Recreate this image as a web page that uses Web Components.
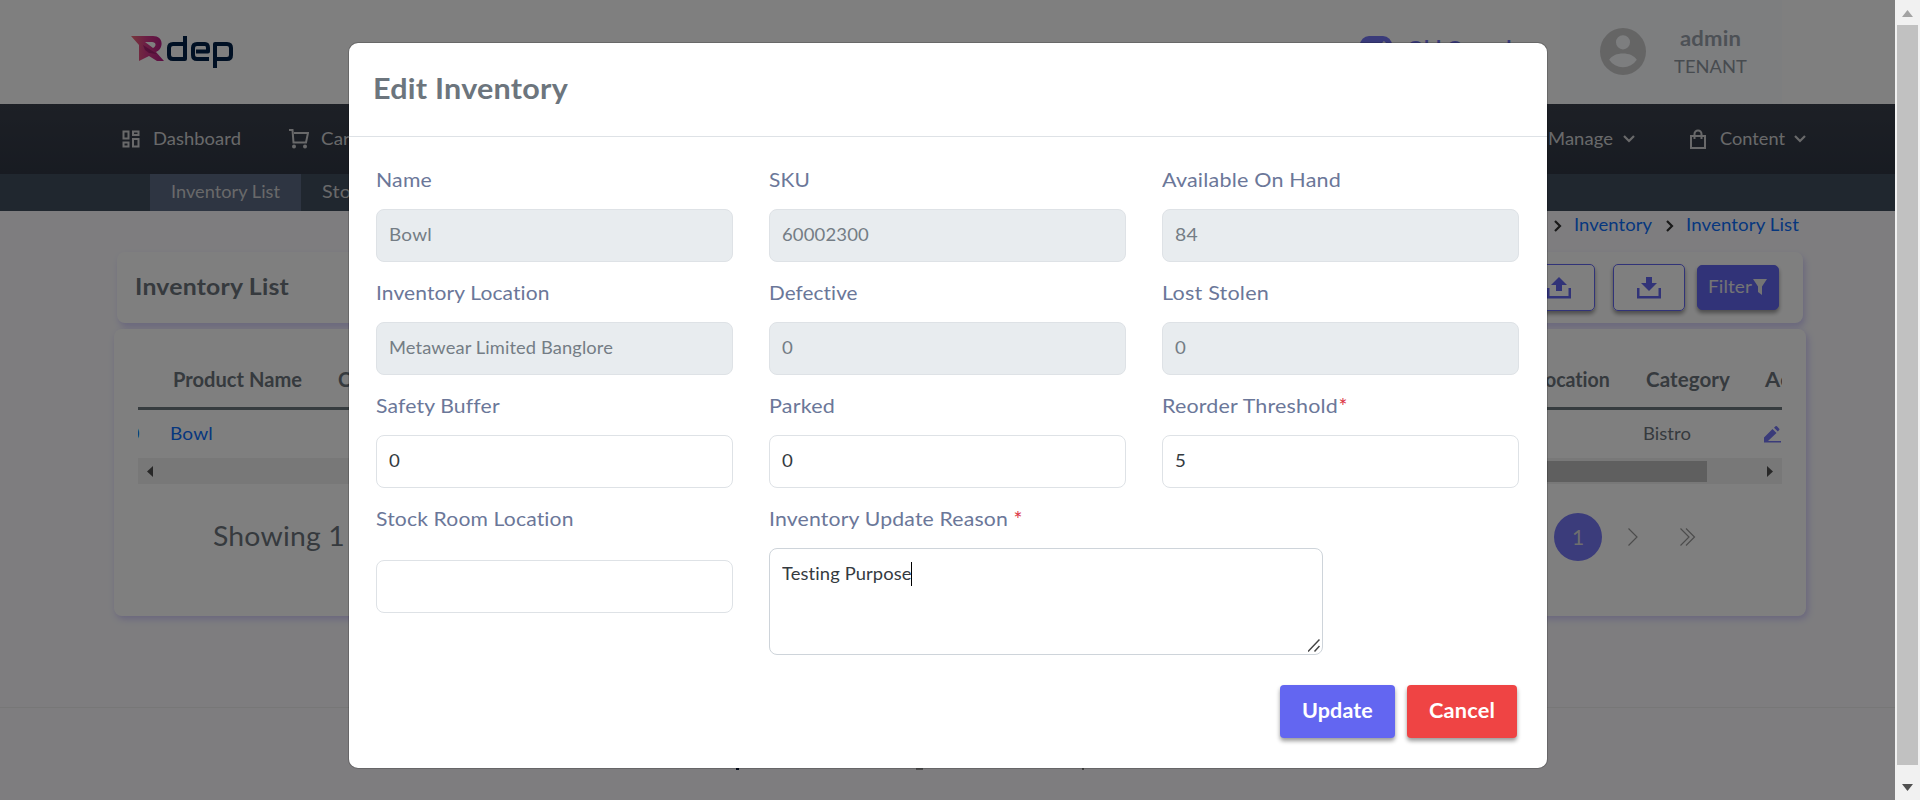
<!DOCTYPE html>
<html lang="en"><head><meta charset="utf-8"><title>Edit Inventory</title>
<style>
html,body{margin:0;height:800px;overflow:hidden;background:#fff;font-family:Lato,"Open Sans",sans-serif}
</style></head><body><inventory-app></inventory-app>
<script>
const define=(name,html,after)=>customElements.define(name,class extends HTMLElement{
  connectedCallback(){
    if(this.shadowRoot)return;
    const t=document.createElement('template');t.innerHTML=html;
    this.attachShadow({mode:'open'}).append(t.content.cloneNode(true));
    if(after)after(this,this.shadowRoot);
  }
});

// Text with a fixed advance: the glyphs are widened so that the word fills its width.
define('fit-text',`<style>:host{display:block;flex:none;white-space:pre;line-height:1.2}span{display:inline-block;white-space:pre;transform-origin:0 50%}</style><span><slot></slot></span>`,(el,r)=>{
  const w=+el.getAttribute('w'),s=r.querySelector('span'),n=el.textContent.length;
  el.style.fontSize=el.getAttribute('s')+'px';
  if(w){
    const nat=s.getBoundingClientRect().width,spacing=(w-nat)*.2/n;
    el.style.width=w+'px';s.style.letterSpacing=spacing+'px';
    s.style.transform=`scaleX(${w/(nat+spacing*n)})`;
  }
});

const icons={
 dash:['0 0 18 18','<path fill="none" stroke="currentColor" stroke-width="2" d="M1.5 1.5h5v7h-5zM11 1.5h5.500v3.500H11zM1.500 12.500h5v4h-5zM11 9h5.500v7.500H11z"/>'],
 cart:['0 0 20 20','<path fill="none" stroke="currentColor" stroke-width="2" d="M0 1h3.500l1 12.500H17L19 4H5"/><circle cx="5" cy="17.500" r="2"/><circle cx="16" cy="17.500" r="2"/>'],
 bag:['0 0 16 20','<path fill="none" stroke="currentColor" stroke-width="2" d="M1 7h14v12H1zM4.500 10V5a3.500 3.500 0 0 1 7 0v5"/>'],
 down:['0 0 12 8','<path fill="none" stroke="currentColor" stroke-width="2.200" d="M1 1l5 5 5-5"/>'],
 right:['0 0 8 12','<path fill="none" stroke="currentColor" stroke-width="2.200" d="M1 1l5 5-5 5"/>'],
 next:['0 0 10 18','<path fill="none" stroke="currentColor" stroke-width="1.200" d="M.5.500l8.500 8.500-8.500 8.500"/>'],
 last:['0 0 16 18','<path fill="none" stroke="currentColor" stroke-width="1.200" d="M.5.500l8.500 8.500-8.500 8.500M6 .5l8.500 8.500L6 17.500"/>'],
 user:['0 0 46 46','<path fill-rule="evenodd" d="M23 0a23 23 0 1 0 0 46 23 23 0 0 0 0-46zM23 7a7 7 0 1 1 0 14 7 7 0 0 1 0-14zM9.200 31C12 27 17 25 23 25s11 2 13.800 6A16.600 16.600 0 0 1 9.200 31z"/>'],
 upload:['0 0 24 22','<path d="M12 0l8 8h-5v6H9V8H4zM0 11h2.500v8h19v-8H24v10.500H0z"/>'],
 download:['0 0 24 22','<path d="M9 0h6v6h5l-8 8-8-8h5zM0 11h2.500v8h19v-8H24v10.500H0z"/>'],
 funnel:['0 0 14 16','<path d="M0 0h14L9 7.500V16l-4-3V7.500z"/>'],
 pencil:['0 0 17 17','<path d="M0 11.500L8.500 3l4 4L4 15H0zM10 1.800L11.500.300q.7-.6 1.400 0l2.300 2.400q.6.600 0 1.300L13.800 5.600zM0 15h17v1.500H0z"/>'],
 left:['0 0 6 11','<path d="M6 0v11L0 5.500z"/>'],
 rightTri:['0 0 6 11','<path d="M0 0v11l6-5.500z"/>'],
 upTri:['0 0 11 7','<path d="M5.500 0L11 7H0z"/>'],
 downTri:['0 0 11 7','<path d="M0 0h11L5.500 7z"/>'],
 grip:['0 0 12 13','<path fill="none" stroke="#444" stroke-width="1.500" d="M0 12.500L11.500.500M6.500 12.500L11.500 7"/>'],
 edit:['0 0 32 30','<rect width="32" height="30" rx="9"/><path stroke="#fff" stroke-width="3" d="M12 21L25 6"/>']
};
define('ui-icon',`<style>:host{display:block;flex:none}svg{display:block;width:100%;height:100%;fill:currentColor}</style>`,(el,r)=>{
  const [vb,p]=icons[el.getAttribute('name')],b=vb.split(' ');
  el.style.width=(el.getAttribute('w')||b[2])+'px';el.style.height=(el.getAttribute('h')||b[3])+'px';
  r.innerHTML+=`<svg viewBox="${vb}" preserveAspectRatio="none">${p}</svg>`;
});

define('brand-logo',`<style>:host{display:block;width:104px;height:36px}svg{display:block}</style>
<svg width="104" height="36" viewBox="0 0 104 36"><defs><linearGradient id="g"><stop offset="0" stop-color="#f07078"/><stop offset=".45" stop-color="#d83c88"/><stop offset="1" stop-color="#b41a86"/></linearGradient></defs>
<path fill="url(#g)" fill-rule="evenodd" d="M0 1h22c11 0 11 13 3 16l8 9h-7l-8-5-10 5V10zM14 7l8 6c4-2 3-6-1-6z"/><path fill="#8c1764" opacity=".65" d="M12 10l14 9-8-1-4-3z"/>
<path fill="none" stroke="#002048" stroke-width="4" stroke-linejoin="round" d="M54 1v23H42q-4 0-4-4v-7q0-4 4-4h12M78 24H66q-4 0-4-4v-7q0-4 4-4h8q3 0 3 4v3.500H65M84 33V9h12q4 0 4 4v7q0 4-4 4H84"/></svg>`);

define('top-header',`<style>:host{display:flex;height:104px;background:#fff;box-sizing:border-box;padding-left:131px;width:1895px}
brand-logo{margin-top:35px}.old{display:flex;margin:36px 0 0 1125px;color:#7476f4;width:200px;gap:15px;font-weight:700}
.user{width:222px;height:104px;background:#fafcff;display:flex;color:#ccc}.user ui-icon{margin:28px 0 0 40px;color:#cbcbcb}
.who{display:flex;flex-direction:column;margin-left:27px;width:74px;align-items:center}.n{margin-top:25px;font-weight:700;color:#9aa3ad}.t{margin-top:6px;color:#8f979f}</style>
<brand-logo></brand-logo><div class="old"><ui-icon name="edit"></ui-icon><fit-text s="20" w="116">Old Console</fit-text></div>
<div class="user"><ui-icon name="user" w="46" h="47"></ui-icon><div class="who"><fit-text class="n" s="21" w="61">admin</fit-text><fit-text class="t" s="18" w="73">TENANT</fit-text></div></div>`);

define('main-nav',`<style>:host{display:block;width:1895px;color:#d2d3d5}
.a{height:70px;display:flex;align-items:center;background:linear-gradient(#3a404c,#303744);padding-left:122px}
.b{height:37px;display:flex;background:#404e5e;padding-left:150px;align-items:center;border-top:0}
.tab{background:#5c6a84;width:151px;height:37px;display:flex;align-items:center;justify-content:center}.b>fit-text{margin-left:21px}.b fit-text{margin-top:-2px}</style>
<div class="a"><ui-icon name="dash"></ui-icon><fit-text s="18" w="88" style="margin-left:13px">Dashboard</fit-text><ui-icon name="cart" style="margin-left:48px"></ui-icon><fit-text s="18" w="29" style="margin-left:12px">Car</fit-text>
<fit-text s="18" w="65" style="margin-left:1198px">Manage</fit-text><ui-icon name="down" style="margin-left:10px"></ui-icon><ui-icon name="bag" style="margin-left:55px"></ui-icon><fit-text s="18" w="65" style="margin-left:14px">Content</fit-text><ui-icon name="down" style="margin-left:9px"></ui-icon></div>
<div class="b"><div class="tab"><fit-text s="18" w="109">Inventory List</fit-text></div><fit-text s="18" w="29">Sto</fit-text></div>`);

define('bread-crumbs',`<style>:host{display:flex;height:41px;width:1895px;box-sizing:border-box;padding:3px 0 0 1554px;color:#0d6efd}ui-icon{color:#333;margin-top:6px}</style>
<ui-icon name="right"></ui-icon><fit-text s="18" w="78" style="margin-left:12px">Inventory</fit-text><ui-icon name="right" style="margin-left:14px"></ui-icon><fit-text s="18" w="113" style="margin-left:12px">Inventory List</fit-text>`);

define('title-bar',`<style>:host{display:flex;align-items:center;width:1686px;height:71px;margin-left:117px;border-radius:8px;background:#fff;box-shadow:2px 4px 6px rgba(99,80,240,.25);box-sizing:border-box;padding-left:18px;color:#6c757d}
.btn{box-sizing:border-box;height:47px;width:72px;border:1px solid #6366f1;border-radius:5px;display:flex;align-items:center;justify-content:center;color:#6366f1;box-shadow:0 3px 4px rgba(0,0,0,.4)}
.f{background:#6366f1;color:#e8e8e8;width:82px;height:45px;margin-left:12px;gap:1px;padding-right:2px}.f *{margin-top:-2px}</style>
<fit-text s="23" w="154" style="font-weight:700;margin-top:-2px">Inventory List</fit-text><div class="btn" style="margin-left:1234px"><ui-icon name="upload"></ui-icon></div><div class="btn" style="margin-left:18px"><ui-icon name="download"></ui-icon></div><div class="btn f"><fit-text s="18" w="44">Filter</fit-text><ui-icon name="funnel"></ui-icon></div>`);

define('stock-table',`<style>:host{display:block;width:1692px;height:287px;margin:6px 0 0 114px;border-radius:8px;background:#fff;box-shadow:2px 3px 7px rgba(99,80,240,.28);box-sizing:border-box;padding:0 24px;color:#6c757d}
.h{height:78px;box-sizing:border-box;padding:38px 0 0 35px;display:flex;border-bottom:0;font-weight:700;overflow:hidden}
.l{height:3px;background:#6c787e}.r{height:48px;display:flex;align-items:center;color:#6c757d;overflow:hidden}.k{color:#0d6efd}
.s{height:26px;background:#f0f0f0;display:flex;align-items:center;color:#505050;padding:0 9px}.th{height:21px;width:1254px;background:#bfbfbf;margin-left:300px}
.p{display:flex;align-items:center;height:106px}.p ui-icon{color:#999}.c{width:48px;height:48px;border-radius:50%;background:#7678f6;color:#ddd;display:flex;align-items:center;justify-content:center;margin-left:1209px}</style>
<div class="h"><fit-text s="20" w="129">Product Name</fit-text><fit-text s="20" style="margin-left:36px;width:20px">C</fit-text><fit-text s="20" w="65" style="margin-left:1187px">ocation</fit-text><fit-text s="20" w="84" style="margin-left:36px">Category</fit-text><fit-text s="20" w="26" style="margin-left:35px">Ac</fit-text></div>
<div class="l"></div>
<div class="r"><fit-text class="k" s="18" style="margin-left:-9px;width:10px">0</fit-text><fit-text class="k" s="18" w="43" style="margin-left:31px">Bowl</fit-text><fit-text s="18" w="48" style="margin-left:1430px">Bistro</fit-text><ui-icon name="pencil" style="margin-left:73px;color:#7476f4"></ui-icon></div>
<div class="s"><ui-icon name="left"></ui-icon><div class="th"></div><ui-icon name="rightTri" style="margin-left:auto"></ui-icon></div>
<div class="p"><fit-text s="27" w="132" style="margin-left:75px;margin-top:-2px">Showing 1</fit-text><div class="c"><fit-text s="21">1</fit-text></div><ui-icon name="next" style="margin-left:26px"></ui-icon><ui-icon name="last" style="margin-left:42px"></ui-icon></div>`);

define('page-footer',`<style>:host{display:flex;margin-top:91px;width:1895px;height:92px;border-top:1px solid #eee;box-sizing:border-box;padding:60px 0 0 736px}i{height:2px;flex:none}</style>
<i style="width:3px;background:#001030"></i><i style="width:7px;background:#999;margin-left:177px"></i><i style="width:2px;background:#888;margin-left:159px"></i>`);

define('page-scrollbar',`<style>:host{display:flex;flex-direction:column;align-items:center;width:25px;height:800px;background:#f1f1f1;color:#a3a3a3;box-sizing:border-box;padding:10px 0 9px}.t{width:21px;height:740px;background:#c1c1c1;margin-top:8px}</style><ui-icon name="upTri"></ui-icon><div class="t"></div><ui-icon name="downTri" style="margin-top:auto;color:#505050"></ui-icon>`);

define('form-field',`<style>:host{display:block;color:#6b7799}.lab{display:flex;height:24px;margin-top:-3px}.box{box-sizing:border-box;width:357px;height:53px;border:1px solid #dee2e6;border-radius:8px;background:#fff;margin-top:18px;padding-left:12px;display:flex;align-items:center;color:#343a40}
:host([disabled]) .box{background:#e8ecef;color:#747d85}:host([low]) .box{margin-top:30px}
:host([area]) .box{width:554px;height:107px;border-color:#ced4da;align-items:flex-start;padding-top:13px;position:relative}
.caret{width:1px;height:24px;background:#000;margin-left:-1px;display:none}:host([area]) .caret{display:block}
.grip{display:none;position:absolute;right:2px;bottom:2px}:host([area]) .grip{display:block}.req{color:#dc3545}.box fit-text{margin-top:-3px}:host([area]) .box fit-text{margin-top:1px}</style>
<div class="lab"></div><div class="box"><div class="caret"></div><ui-icon class="grip" name="grip"></ui-icon></div>`,(el,r)=>{
  const a=n=>el.getAttribute(n),lab=r.querySelector('.lab'),box=r.querySelector('.box');
  lab.innerHTML=`<fit-text s="20" w="${a('lw')-1}">${a('label')}</fit-text>`+(a('req')!==null?`<fit-text class="req" s="21" style="margin-left:${a('req')}px">*</fit-text>`:'');
  if(a('value'))box.insertAdjacentHTML('afterbegin',`<fit-text s="17.5" w="${a('vw')}">${a('value')}</fit-text>`);
});

define('action-button',`<style>:host{box-sizing:border-box;display:flex;align-items:center;justify-content:center;height:53px;border-radius:4px;background:#6366f1;color:#fff;font-weight:700;padding-bottom:2px;box-shadow:0 3px 4px rgba(0,0,0,.4)}:host([danger]){background:#ef4444}</style><slot></slot>`);

define('edit-dialog',`<style>:host{display:block;box-sizing:border-box;width:1200px;height:727px;border:1px solid rgba(0,0,0,.18);background:#fff;background-clip:padding-box;border-radius:10px}
header{height:94px;border-bottom:1px solid #dee2e6;box-sizing:border-box;padding:28px 0 0 24px;color:#6c757d;font-weight:700}
.g{display:grid;grid-template-columns:357px 357px 357px;column-gap:36px;grid-auto-rows:113px;padding:33px 0 0 27px}.wide{grid-column:2/4}
footer{display:flex;justify-content:flex-end;gap:12px;padding-right:30px;margin-top:63px}</style>
<header><fit-text s="28.5" w="195">Edit Inventory</fit-text></header>
<div class="g">
<form-field disabled label="Name" lw="57" value="Bowl" vw="43"></form-field><form-field disabled label="SKU" lw="42" value="60002300" vw="87"></form-field><form-field disabled label="Available On Hand" lw="180" value="84" vw="23"></form-field>
<form-field disabled label="Inventory Location" lw="175" value="Metawear Limited Banglore" vw="224"></form-field><form-field disabled label="Defective" lw="90" value="0" vw="11"></form-field><form-field disabled label="Lost Stolen" lw="108" value="0" vw="11"></form-field>
<form-field label="Safety Buffer" lw="124" value="0" vw="11"></form-field><form-field label="Parked" lw="67" value="0" vw="11"></form-field><form-field label="Reorder Threshold" lw="177" req="1" value="5" vw="11"></form-field>
<form-field low label="Stock Room Location" lw="199"></form-field><form-field area class="wide" label="Inventory Update Reason" lw="240" req="6" value="Testing Purpose" vw="130"></form-field></div>
<footer><action-button style="width:115px"><fit-text s="20.500" w="71">Update</fit-text></action-button><action-button danger style="width:110px"><fit-text s="20.500" w="66">Cancel</fit-text></action-button></footer>`);

define('inventory-app',`<style>:host{display:flex;width:1920px;height:800px;overflow:hidden;position:relative}main{width:1895px;height:800px;background:#fcfbff;flex:none}
.veil{position:absolute;inset:0 25px 0 0;background:rgba(0,0,0,.5);display:flex;justify-content:center;align-items:flex-start;padding-top:42px}</style>
<main><top-header></top-header><main-nav></main-nav><bread-crumbs></bread-crumbs><title-bar></title-bar><stock-table></stock-table><page-footer></page-footer></main><page-scrollbar></page-scrollbar><div class="veil"><edit-dialog></edit-dialog></div>`);
</script></body></html>
